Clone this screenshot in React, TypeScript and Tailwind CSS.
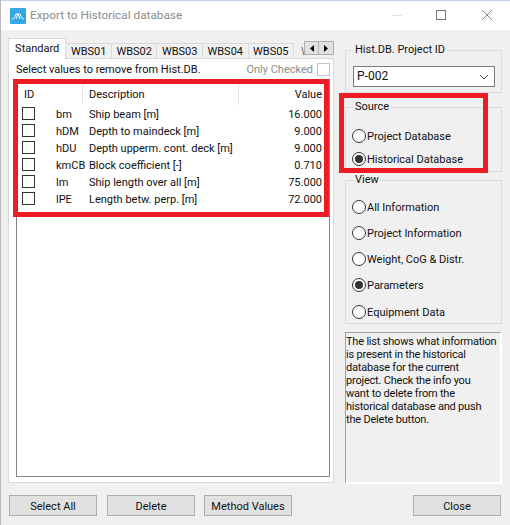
const rows = [
  ["bm", "Ship beam [m]", "16.000"],
  ["hDM", "Depth to maindeck [m]", "9.000"],
  ["hDU", "Depth upperm. cont. deck [m]", "9.000"],
  ["kmCB", "Block coefficient [-]", "0.710"],
  ["lm", "Ship length over all [m]", "75.000"],
  ["lPE", "Length betw. perp. [m]", "72.000"],
];

const tabs = ["WBS01", "WBS02", "WBS03", "WBS04", "WBS05"];

const helpLines = [
  "The list shows what information",
  "is present in the historical",
  "database for the current",
  "project. Check the info you",
  "want to delete from the",
  "historical database and push",
  "the Delete button.",
];

function Radio({ label, checked, className }: { label: string; checked?: boolean; className: string }) {
  return (
    <div className={`flex items-center h-[14px] ${className}`}>
      <span className="flex items-center justify-center w-[14px] h-[14px] rounded-full border border-[#333] bg-white shrink-0">
        {checked && <span className="w-[8px] h-[8px] rounded-full bg-[#333]" />}
      </span>
      <span className="ml-[1px] whitespace-nowrap">{label}</span>
    </div>
  );
}

function Group({ title, className, children }: { title: string; className: string; children?: React.ReactNode }) {
  return (
    <fieldset className={`border border-[#dcdcdc] px-[6px] ${className}`}>
      <legend className="ml-[1px] px-[2px] leading-[14px]">{title}</legend>
      {children}
    </fieldset>
  );
}

function Button({ label, className }: { label: string; className: string }) {
  return (
    <button className={`h-[21px] w-[88px] pt-[1px] border border-[#adadad] bg-[#e1e1e1] text-[#111] ${className}`}>{label}</button>
  );
}

export default function App() {
  return (
    <div className="relative w-[510px] h-[525px] overflow-hidden bg-[#f0f0f0] text-[11px] leading-[17px] text-[#111] border-l border-[#b8b8b8] font-['Roboto',sans-serif]">
      <div className="flex items-center h-[30px] bg-white border-t border-[#c5d3e6] text-[#8c8c8c]">
        <svg width="16" height="16" viewBox="0 0 16 16" className="ml-[9px]">
          <rect width="16" height="16" rx="1" fill="#35a9e6" />
          <path d="M2 11 C4 11 5 9 6 6 H10 C11 9 12 11 14 11 M6 11 L8 6 L10 11" stroke="#fff" strokeWidth="1" fill="none" />
        </svg>
        <span className="ml-[4px] text-[11.8px]">Export to Historical database</span>
        <svg width="110" height="12" viewBox="0 0 110 12" className="ml-auto mr-[8px] -mt-[2px]" fill="none">
          <path d="M0 6.5 H10" stroke="#e4e4e4" />
          <rect x="44.5" y="1.5" width="9" height="9" stroke="#777" />
          <path d="M90 1 L100 11 M100 1 L90 11" stroke="#888" />
        </svg>
      </div>

      <div className="flex">
        <div className="w-[326px] ml-[7px] mt-[8px] shrink-0">
          <div className="flex items-end h-[20px] relative z-10">
            <div className="flex items-center justify-center w-[59px] h-[21px] -mb-[1px] pb-[2px] bg-white border border-b-0 border-[#d9d9d9]">Standard</div>
            {tabs.map((tab) => (
              <div key={tab} className="flex items-center justify-center w-[46px] h-[15px] bg-[#f0f0f0] border border-b-0 border-l-0 border-[#d9d9d9]">{tab}</div>
            ))}
            <div className="w-[10px] h-[15px] pl-[7px] overflow-hidden text-[#777]">W</div>
            <div className="flex self-start mt-[3px]">
              <div className="flex items-center justify-center w-[15px] h-[14px] bg-[#e1e1e1] border border-[#adadad]">
                <svg width="4" height="7" viewBox="0 0 4 7"><path d="M4 0 V7 L0 3.5 Z" fill="#000" /></svg>
              </div>
              <div className="flex items-center justify-center w-[15px] h-[14px] bg-[#e1e1e1] border border-l-0 border-[#adadad]">
                <svg width="4" height="7" viewBox="0 0 4 7"><path d="M0 0 V7 L4 3.5 Z" fill="#000" /></svg>
              </div>
            </div>
          </div>

          <div className="h-[425px] bg-white border border-[#d9d9d9] pl-[7px] pr-[3px]">
            <div className="flex items-center h-[20px]">
              <span>Select values to remove from Hist.DB.</span>
              <span className="ml-auto text-[#8c8c8c]">Only Checked</span>
              <span className="ml-[4px] w-[13px] h-[13px] border border-[#c4c4c4] bg-white" />
            </div>
            <div className="w-[314px] h-[398px] border border-[#82878c] bg-white pt-[4px]">
              <div className="flex h-[21px] items-center">
                <span className="w-[66px] pl-[7px] border-r border-[#e4e4e4] h-full flex items-center">ID</span>
                <span className="w-[156px] pl-[6px] border-r border-[#e4e4e4] h-full flex items-center">Description</span>
                <span className="flex-1 text-right pr-[7px]">Value</span>
              </div>
              {rows.map(([id, description, value]) => (
                <div key={id} className="flex items-center h-[17px]">
                  <span className="ml-[5px] w-[13px] h-[13px] border border-[#333] bg-white shrink-0" />
                  <span className="ml-[21px] w-[33px] pt-[1px] shrink-0">{id}</span>
                  <span className="pt-[1px] whitespace-nowrap">{description}</span>
                  <span className="ml-auto pt-[1px] pr-[7px]">{value}</span>
                </div>
              ))}
            </div>
          </div>

          <div className="flex mt-[12px] ml-[1px]">
            <Button label="Select All" className="" />
            <Button label="Delete" className="ml-[10px]" />
            <Button label="Method Values" className="ml-[9px]" />
          </div>
        </div>

        <div className="w-[157px] ml-[11px] mt-[13px] shrink-0">
          <Group title="Hist.DB. Project ID" className="h-[50px]">
            <div className="flex items-center w-[142px] h-[21px] mt-[9px] ml-[1px] border border-[#7a7a7a] bg-white pl-[3px] text-[12px]">
              <span>P-002</span>
              <svg width="10" height="6" viewBox="0 0 10 6" className="ml-auto mr-[5px]" fill="none">
                <path d="M1 1 L5 5 L9 1" stroke="#555" />
              </svg>
            </div>
          </Group>
          <Group title="Source" className="h-[72px] mt-[7px]">
            <Radio label="Project Database" className="mt-[15px]" />
            <Radio label="Historical Database" checked className="mt-[9px]" />
          </Group>
          <Group title="View" className="h-[151px] mt-[1px]">
            <Radio label="All Information" className="mt-[13px]" />
            <Radio label="Project Information" className="mt-[12px]" />
            <Radio label="Weight, CoG & Distr." className="mt-[12px]" />
            <Radio label="Parameters" checked className="mt-[12px]" />
            <Radio label="Equipment Data" className="mt-[13px]" />
          </Group>
          <div className="h-[152px] mt-[8px] border-l border-t border-[#a0a0a0] border-r-2 border-r-white border-b-2 border-b-white leading-[13px] pt-[2px] whitespace-nowrap tracking-[-0.2px]">
            {helpLines.map((line) => (
              <div key={line}>{line}</div>
            ))}
          </div>
          <div className="flex justify-end mt-[11px]">
            <Button label="Close" className="mr-[1px]" />
          </div>
        </div>
      </div>

      <div className="absolute left-[12px] top-[79px] w-[316px] h-[138px] border-[5px] border-[#ed1c24]" />
      <div className="absolute left-[338px] top-[93px] w-[149px] h-[80px] border-[5px] border-[#ed1c24]" />
    </div>
  );
}
